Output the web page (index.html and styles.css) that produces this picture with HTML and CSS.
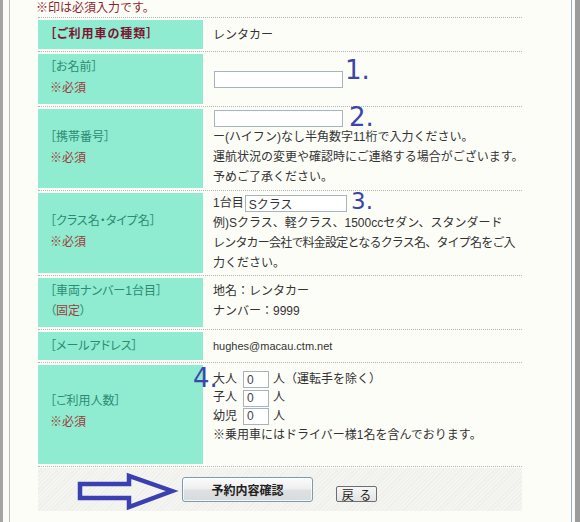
FILE: index.html
```html
<!DOCTYPE html>
<html lang="ja">
<head>
<meta charset="utf-8">
<title>予約フォーム</title>
<link rel="stylesheet" href="styles.css">
</head>
<body>
<div class="frame">
  <div class="inner">
    <p class="note">※印は必須入力です。</p>
    <div class="form">
      <div class="row r1">
        <div class="label"><span class="head">［ご利用車の種類］</span></div>
        <div class="value">レンタカー</div>
      </div>

      <div class="row r2">
        <div class="label"><span>［お名前］</span><span class="req">※必須</span></div>
        <div class="value"><div><input class="txt w129" type="text" value=""></div></div>
        <span class="mark m1">1.</span>
      </div>

      <div class="row r3">
        <div class="label"><span>［携帯番号］</span><span class="req">※必須</span></div>
        <div class="value top">
          <div class="inline18"><input class="txt w129" type="text" value=""></div>
          <div>ー(ハイフン)なし半角数字11桁で入力ください。</div>
          <div>運航状況の変更や確認時にご連絡する場合がございます。</div>
          <div>予めご了承ください。</div>
        </div>
        <span class="mark m2">2.</span>
      </div>

      <div class="row r4">
        <div class="label"><span>［クラス名・タイプ名］</span><span class="req">※必須</span></div>
        <div class="value top">
          <div>1台目<input class="txt w102 gap1" type="text" value="Sクラス"></div>
          <div>例)Sクラス、軽クラス、1500ccセダン、スタンダード</div>
          <div class="tight">レンタカー会社で料金設定となるクラス名、タイプ名をご入</div>
          <div>力ください。</div>
        </div>
        <span class="mark m3">3.</span>
      </div>

      <div class="row r5">
        <div class="label"><span>［車両ナンバー1台目］</span><span>（<span class="req">固定</span>）</span></div>
        <div class="value">
          <div>地名：レンタカー</div>
          <div>ナンバー：9999</div>
        </div>
      </div>

      <div class="row r6">
        <div class="label"><span>［メールアドレス］</span></div>
        <div class="value"><span class="mail">hughes@macau.ctm.net</span></div>
      </div>

      <div class="row r7">
        <div class="label"><span>［ご利用人数］</span><span class="req">※必須</span></div>
        <div class="value top">
          <div class="inline18">大人<input class="txt w26 num" type="text" value="0">人（運転手を除く）</div>
          <div class="inline18">子人<input class="txt w26 num" type="text" value="0">人</div>
          <div class="inline18">幼児<input class="txt w26 num" type="text" value="0">人</div>
          <div>※乗用車にはドライバー様1名を含んでおります。</div>
        </div>
        <span class="mark m4">4.</span>
      </div>

      <div class="actions">
        <div class="bar">
          <svg class="arrow" width="104" height="42" viewBox="0 0 104 42" aria-hidden="true">
            <polygon points="4,12 53,12 53,4 96,19 53,35 53,26 4,26" fill="none" stroke="#3a40b2" stroke-width="4.5" stroke-linejoin="miter"/>
          </svg>
          <button class="btn-main" type="button">予約内容確認</button>
          <button class="btn-back" type="button">戻&nbsp;&nbsp;る</button>
        </div>
      </div>
    </div>
  </div>
</div>
</body>
</html>
```

FILE: styles.css
```css
* { box-sizing: border-box; }

html, body {
  margin: 0;
  padding: 0;
}

body {
  background: #fdfdf8;
  font-family: "Liberation Sans", "Noto Sans CJK JP", sans-serif;
  font-size: 12px;
  color: #333;
}

.frame {
  height: 522px;
  border-left: 3px solid #a4a4a4;
  border-right: 5px solid #9b9b9b;
  padding: 0 3px 0 6px;
  background: #fbfbf7;
  overflow: hidden;
}

.inner {
  height: 100%;
  border-left: 1px solid #b6bdc3;
  border-right: 1px solid #98aebd;
  background: #fdfdf8;
  padding-left: 28px;
}

.note {
  margin: 0 0 0 -2px;
  line-height: 17px;
  color: #8c1f2e;
}

.form {
  width: 484px;
}

.row {
  position: relative;
  display: grid;
  grid-template-columns: 165px 1fr;
  border-top: 1px dotted #b5b5b5;
  padding: 2px 0;
}

.r1 { grid-template-rows: 29px; }
.r2 { grid-template-rows: 50px; }
.r3 { grid-template-rows: 79px; }
.r4 { grid-template-rows: 80px; }
.r5 { grid-template-rows: 49px; }
.r6 { grid-template-rows: 28px; }
.r7 { grid-template-rows: 99px; }

.label {
  background: #8fecd0;
  padding: 0 0 2px 12px;
  display: flex;
  flex-direction: column;
  justify-content: center;
  line-height: 21px;
  color: #2d8a72;
  white-space: nowrap;
  font-feature-settings: "palt";
}

.r1 .label, .r6 .label { padding-bottom: 0; }
.r2 .label { padding-bottom: 3px; }
.r5 .label { padding-bottom: 4px; line-height: 20px; }
.r7 .label { padding-bottom: 6px; }

.head {
  font-weight: bold;
  color: #7d1430;
  letter-spacing: 1px;
}

.req {
  color: #a03a3a;
}

.value {
  padding-left: 10px;
  display: flex;
  flex-direction: column;
  justify-content: center;
  line-height: 20px;
  white-space: nowrap;
  color: #333;
}

.value.top { justify-content: flex-start; }
.r5 .value { padding-bottom: 4px; }
.r7 .value { padding-top: 5px; }

.inline18 { line-height: 18px; }

.tight { letter-spacing: -0.8px; }

.mail { font-size: 11px; }

.txt {
  height: 17px;
  margin: 0;
  border: 1px solid #a7b3bd;
  background: #fff;
  padding: 0 3px;
  font-family: "Liberation Sans", "Noto Sans CJK JP", sans-serif;
  font-size: 12px;
  color: #333;
  vertical-align: middle;
}

.w129 { width: 129px; margin-left: 1px; }
.w102 { width: 102px; }
.w26 { width: 26px; }
.gap1 { margin-left: 1px; }
.num { margin: 0 4px 0 6px; color: #444; }

.mark {
  position: absolute;
  z-index: 1;
  font-family: "DejaVu Sans", sans-serif;
  font-size: 26px;
  line-height: 26px;
  color: #3b46a8;
}

.m1 { top: 5px; left: 307px; }
.m2 { top: -3px; left: 311px; }
.m3 { top: -1px; left: 313px; font-size: 23px; line-height: 23px; }
.m4 { top: 2px; left: 155px; }

.actions {
  border-top: 1px dotted #b5b5b5;
  padding-top: 1px;
}

.bar {
  height: 43px;
  display: flex;
  align-items: flex-end;
  padding: 0 0 9px 38px;
  background: repeating-linear-gradient(-45deg, #eeeeea 0, #eeeeea 1px, #f4f4f0 1px, #f4f4f0 3px);
}

.arrow {
  display: block;
  flex: none;
  margin-bottom: -12px;
  overflow: visible;
}

.btn-main {
  width: 131px;
  height: 25px;
  margin-left: 2px;
  padding: 0;
  border: 1px solid #7b9cae;
  border-radius: 3px;
  background: linear-gradient(#fbfbfb, #efefef 45%, #dedfe0 55%, #d8dcdf);
  box-shadow: inset 0 0 0 1px rgba(255, 255, 255, 0.7);
  font-family: "Noto Sans CJK JP", sans-serif;
  font-weight: bold;
  font-size: 12px;
  line-height: 22px;
  color: #222;
}

.btn-back {
  width: 41px;
  height: 16px;
  margin-left: 23px;
  padding: 0;
  border: 1px solid #6e6e6e;
  border-radius: 2px;
  background: linear-gradient(#f6f6f6, #e4e4e4);
  font-family: "Noto Sans CJK JP", sans-serif;
  font-size: 12px;
  line-height: 13px;
  color: #222;
}
```
